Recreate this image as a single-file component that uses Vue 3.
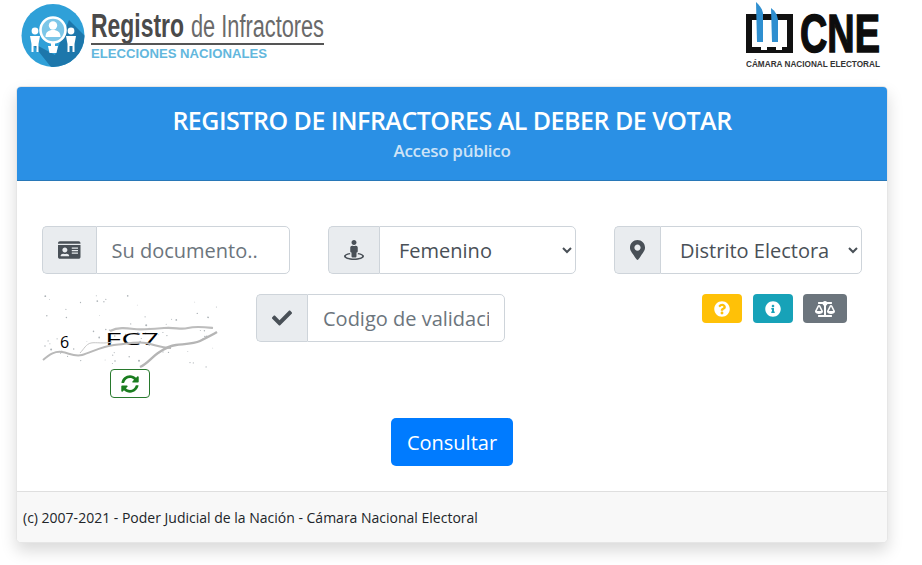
<script setup>
const paths = {
  id: 'M528 32H48C21.5 32 0 53.5 0 80v16h576V80c0-26.5-21.5-48-48-48zM0 432c0 26.5 21.5 48 48 48h480c26.5 0 48-21.5 48-48V128H0v304zm352-232c0-4.4 3.6-8 8-8h144c4.4 0 8 3.6 8 8v16c0 4.4-3.6 8-8 8H360c-4.4 0-8-3.6-8-8v-16zm0 64c0-4.4 3.6-8 8-8h144c4.4 0 8 3.6 8 8v16c0 4.4-3.6 8-8 8H360c-4.4 0-8-3.6-8-8v-16zm0 64c0-4.4 3.6-8 8-8h144c4.4 0 8 3.6 8 8v16c0 4.4-3.6 8-8 8H360c-4.4 0-8-3.6-8-8v-16zM176 192c35.3 0 64 28.7 64 64s-28.7 64-64 64-64-28.7-64-64 28.7-64 64-64zM67.1 396.2C75.5 370.5 99.6 352 128 352h8.2c12.3 5.1 25.7 8 39.8 8s27.6-2.9 39.8-8h8.2c28.4 0 52.5 18.5 60.9 44.2 3.2 9.9-5.2 19.8-15.6 19.8H82.7c-10.4 0-18.8-10-15.6-19.8z',
  street: 'M367.9 329.76c-4.62 5.3-9.78 10.1-15.9 13.65v22.94c66.52 9.34 112 28.05 112 49.65 0 30.93-93.12 56-208 56S48 446.93 48 416c0-21.6 45.48-40.3 112-49.65v-22.94c-6.12-3.55-11.28-8.35-15.9-13.65C58.87 345.34 0 378.05 0 416c0 53.02 114.62 96 256 96s256-42.98 256-96c0-37.95-58.87-70.66-144.1-86.24zM256 128c35.35 0 64-28.65 64-64S291.35 0 256 0s-64 28.65-64 64 28.65 64 64 64zm-64 192v96c0 17.67 14.33 32 32 32h64c17.67 0 32-14.33 32-32v-96c17.67 0 32-14.33 32-32v-96c0-26.51-21.49-48-48-48h-11.8c-11.07 5.03-23.26 8-36.2 8s-25.13-2.97-36.2-8H208c-26.51 0-48 21.49-48 48v96c0 17.67 14.33 32 32 32z',
  marker: 'M172.268 501.67C26.97 291.031 0 269.413 0 192 0 85.961 85.961 0 192 0s192 85.961 192 192c0 77.413-26.97 99.031-172.268 309.67-9.535 13.774-29.93 13.773-39.464 0zM192 272c44.183 0 80-35.817 80-80s-35.817-80-80-80-80 35.817-80 80 35.817 80 80 80z',
  check: 'M173.898 439.404l-166.4-166.4c-9.997-9.997-9.997-26.206 0-36.204l36.203-36.204c9.997-9.998 26.207-9.998 36.204 0L192 312.69 432.095 72.596c9.997-9.997 26.207-9.997 36.204 0l36.203 36.204c9.997 9.997 9.997 26.206 0 36.204l-294.4 294.401c-9.998 9.997-26.207 9.997-36.204-.001z',
  sync: 'M370.72 133.28C339.458 104.008 298.888 87.962 255.848 88c-77.458.068-144.328 53.178-162.791 126.85-1.344 5.363-6.122 9.15-11.651 9.15H24.103c-7.498 0-13.194-6.807-11.807-14.176C33.933 94.924 134.813 8 256 8c66.448 0 126.791 26.136 171.315 68.685L463.03 40.97C478.149 25.851 504 36.559 504 57.941V192c0 13.255-10.745 24-24 24H345.941c-21.382 0-32.09-25.851-16.971-40.971l41.75-41.749zM32 296h134.059c21.382 0 32.09 25.851 16.971 40.971l-41.75 41.75c31.262 29.273 71.835 45.319 114.876 45.28 77.418-.07 144.315-53.144 162.787-126.849 1.344-5.363 6.122-9.15 11.651-9.15h57.304c7.498 0 13.194 6.807 11.807 14.176C478.067 417.076 377.187 504 256 504c-66.448 0-126.791-26.136-171.315-68.685L48.97 471.03C33.851 486.149 8 475.441 8 454.059V320c0-13.255 10.745-24 24-24z',
  question: 'M504 256c0 136.997-111.043 248-248 248S8 392.997 8 256C8 119.083 119.043 8 256 8s248 111.083 248 248zM262.655 90c-54.497 0-89.255 22.957-116.549 63.758-3.536 5.286-2.353 12.415 2.715 16.258l34.699 26.31c5.205 3.947 12.621 3.008 16.665-2.122 17.864-22.658 30.113-35.797 57.303-35.797 20.429 0 45.698 13.148 45.698 32.958 0 14.976-12.363 22.667-32.534 33.976C247.128 238.528 216 254.941 216 296v4c0 6.627 5.373 12 12 12h56c6.627 0 12-5.373 12-12v-1.333c0-28.462 83.186-29.647 83.186-106.667 0-58.002-60.165-102-116.531-102zM256 338c-25.365 0-46 20.635-46 46 0 25.364 20.635 46 46 46s46-20.636 46-46c0-25.365-20.635-46-46-46z',
  info: 'M256 8C119.043 8 8 119.083 8 256c0 136.997 111.043 248 248 248s248-111.003 248-248C504 119.083 392.957 8 256 8zm0 110c23.196 0 42 18.804 42 42s-18.804 42-42 42-42-18.804-42-42 18.804-42 42-42zm56 254c0 6.627-5.373 12-12 12h-88c-6.627 0-12-5.373-12-12v-24c0-6.627 5.373-12 12-12h12v-64h-12c-6.627 0-12-5.373-12-12v-24c0-6.627 5.373-12 12-12h64c6.627 0 12 5.373 12 12v100h12c6.627 0 12 5.373 12 12v24z',
  scale: 'M256 336h-.02c0-16.18 1.34-8.73-85.05-181.51-17.65-35.29-68.19-35.36-85.87 0C-2.06 328.75.02 320.33.02 336H0c0 44.18 57.31 80 128 80s128-35.82 128-80zM128 176l72 144H56l72-144zm511.98 160c0-16.18 1.34-8.73-85.05-181.51-17.65-35.29-68.19-35.36-85.87 0-87.12 174.26-85.04 165.84-85.04 181.51H384c0 44.18 57.31 80 128 80s128-35.82 128-80h-.02zM440 320l72-144 72 144H440zm88 128H352V153.25c23.51-10.29 41.16-31.48 46.39-57.25H528c8.84 0 16-7.16 16-16V48c0-8.84-7.16-16-16-16H383.64C369.04 12.68 346.09 0 320 0s-49.04 12.68-63.64 32H112c-8.84 0-16 7.16-16 16v32c0 8.84 7.16 16 16 16h129.61c5.23 25.76 22.87 46.96 46.39 57.25V448H112c-8.84 0-16 7.16-16 16v32c0 8.84 7.16 16 16 16h416c8.84 0 16-7.16 16-16v-32c0-8.84-7.16-16-16-16z'
}

let seed = 17
const rnd = () => {
  seed = (seed * 1103 + 12345) % 65536
  return seed / 65536
}
const dots = Array.from({ length: 70 }, () => ({
  x: +(rnd() * 174 + 1).toFixed(1),
  y: +(rnd() * 72 + 1).toFixed(1),
  r: +(0.4 + rnd() * 0.6).toFixed(2)
}))
</script>

<template>
  <div class="page">
    <header class="top">
      <svg class="logo-left" viewBox="0 0 310 66" width="310" height="66" role="img" aria-label="Registro de Infractores">
        <defs>
          <clipPath id="disc"><circle cx="32" cy="33.500" r="31.500" /></clipPath>
        </defs>
        <circle cx="32" cy="33.500" r="31.500" fill="#2fa0d8" />
        <g clip-path="url(#disc)">
          <path d="M10 40 L34 53 L48 18 L70 40 L70 70 L34 70 Z" fill="#1d77ab" />
        </g>
        <circle cx="32" cy="28" r="12.500" fill="#7cc6e8" stroke="#fff" stroke-width="2.600" />
        <circle cx="32" cy="23.500" r="4.200" fill="#fff" />
        <path d="M24.500 35 c0-5 3-7 7.500-7 s7.500 2 7.500 7 Z" fill="#fff" />
        <rect x="30" y="41" width="4" height="3" fill="#fff" />
        <path d="M27 44 h10 l-1.500 7 h-7 Z" fill="#fff" />
        <circle cx="14" cy="29" r="3.400" fill="#fff" />
        <path d="M9 34 h10 l-1.500 8 v8 h-2 v-6 h-3 v6 h-2 v-8 Z" fill="#fff" />
        <circle cx="50" cy="29" r="3.400" fill="#fff" />
        <path d="M45 34 h10 l-1.500 8 v8 h-2 v-6 h-3 v6 h-2 v-8 Z" fill="#fff" />
        <text x="70" y="35" class="logo-strong" textLength="93" lengthAdjust="spacingAndGlyphs">Registro</text>
        <text x="170" y="35" class="logo-light" textLength="133" lengthAdjust="spacingAndGlyphs">de Infractores</text>
        <rect x="70" y="41" width="233" height="2" fill="#555" />
        <text x="70" y="56" class="logo-sub" textLength="176" lengthAdjust="spacingAndGlyphs">ELECCIONES NACIONALES</text>
      </svg>
      <svg class="logo-right" viewBox="0 0 136 70" width="136" height="70" role="img" aria-label="CNE">
        <path d="M0 14 H47 V53 H0 Z M6 20 V47 H41 V20 Z" fill="#111" fill-rule="evenodd" />
        <rect x="15" y="20" width="6" height="30" fill="#fff" />
        <rect x="30" y="20" width="6" height="30" fill="#fff" />
        <path d="M10 2 C13 5 16 8 17 13 V42 H11 Z" fill="#2f8fd0" />
        <path d="M25 8 C29 11 31 14 32 20 V42 H26 Z" fill="#2f8fd0" />
        <text x="54" y="52" class="cne-big" textLength="80" lengthAdjust="spacingAndGlyphs">CNE</text>
        <text x="0" y="67" class="cne-small" textLength="134" lengthAdjust="spacingAndGlyphs">CÁMARA NACIONAL ELECTORAL</text>
      </svg>
    </header>

    <section class="card">
      <div class="card-head">
        <h1>REGISTRO DE INFRACTORES AL DEBER DE VOTAR</h1>
        <p>Acceso público</p>
      </div>

      <div class="card-body">
        <div class="row-one">
          <div class="group">
            <span class="addon"><svg class="ico" viewBox="0 0 576 512" width="22.500" height="20"><path :d="paths.id" /></svg></span>
            <input class="field" type="text" placeholder="Su documento.." />
          </div>
          <div class="group">
            <span class="addon"><svg class="ico" viewBox="0 0 512 512" width="20" height="20"><path :d="paths.street" /></svg></span>
            <select class="field">
              <option>Femenino</option>
              <option>Masculino</option>
            </select>
          </div>
          <div class="group">
            <span class="addon"><svg class="ico" viewBox="0 0 384 512" width="15" height="20"><path :d="paths.marker" /></svg></span>
            <select class="field">
              <option>Distrito Electoral</option>
            </select>
          </div>
        </div>

        <div class="row-two">
          <div class="captcha">
            <svg viewBox="0 0 176 75" width="176" height="75" role="img" aria-label="captcha">
              <circle v-for="(d, i) in dots" :key="i" :cx="d.x" :cy="d.y" :r="d.r" fill="#aeb4b8" />
              <text x="18" y="54" class="cap-one">6</text>
              <text x="63" y="51" class="cap-two" textLength="54" lengthAdjust="spacingAndGlyphs">FC7</text>
              <path d="M1 66 C8 60 13 57 20 58 S32 63 40 61 S60 52 72 51 S95 47 104 49 S120 54 129 54" fill="none" stroke="#b9b9b9" stroke-width="2" />
              <path d="M68 37 C76 33 84 34 92 35 S110 35 122 34 S138 36 146 34 S162 33 171 34" fill="none" stroke="#bdbdbd" stroke-width="2.200" />
              <path d="M98 73 C105 70 110 63 116 59 S126 52 134 51 S152 50 158 47 S170 41 175 38" fill="none" stroke="#b5b5b5" stroke-width="2.400" />
              <path d="M38 59 C42 55 44 50 49 49 S62 50 70 48" fill="none" stroke="#c6c6c6" stroke-width="1" />
            </svg>
            <button class="refresh" type="button" aria-label="Actualizar"><svg viewBox="0 0 512 512" width="18" height="18"><path :d="paths.sync" fill="#1a7d1f" /></svg></button>
          </div>

          <div class="group code">
            <span class="addon"><svg class="ico" viewBox="0 0 512 512" width="20" height="20"><path :d="paths.check" /></svg></span>
            <input class="field" type="text" placeholder="Codigo de validación" />
          </div>

          <div class="actions">
            <button class="mini yellow" type="button" aria-label="Ayuda"><svg viewBox="0 0 512 512" width="16" height="16"><path :d="paths.question" fill="#fff" /></svg></button>
            <button class="mini teal" type="button" aria-label="Información"><svg viewBox="0 0 512 512" width="16" height="16"><path :d="paths.info" fill="#fff" /></svg></button>
            <button class="mini gray" type="button" aria-label="Legal"><svg viewBox="0 0 640 512" width="20" height="16"><path :d="paths.scale" fill="#fff" /></svg></button>
          </div>
        </div>

        <button class="submit" type="button">Consultar</button>
      </div>

      <footer class="card-foot">(c) 2007-2021 - Poder Judicial de la Nación - Cámara Nacional Electoral</footer>
    </section>
  </div>
</template>

<style>
html, body { margin: 0; background: #fff; }
</style>

<style scoped>
.page {
  box-sizing: border-box;
  width: 922px;
  height: 565px;
  overflow: hidden;
  padding: 0 34px 0 16px;
  font-family: "Open Sans", "Liberation Sans", sans-serif;
  color: #212529;
}
.top {
  height: 86px;
  display: flex;
  justify-content: space-between;
  align-items: flex-start;
}
.logo-left { margin: 2px 0 0 5px; }
.logo-right { margin: 0 6px 0 0; }
.logo-strong { font: 700 33px "Liberation Sans", sans-serif; fill: #4a4a4a; }
.logo-light { font: 400 31px "Liberation Sans", sans-serif; fill: #6a6a6a; }
.logo-sub { font: 700 12px "Liberation Sans", sans-serif; fill: #62b7dd; }
.cne-big { font: 700 54px "Liberation Sans", sans-serif; fill: #0d0d0d; stroke: #0d0d0d; stroke-width: 1.500px; }
.cne-small { font: 700 9px "Liberation Sans", sans-serif; fill: #333; }
.card {
  height: 457px;
  box-sizing: border-box;
  display: flex;
  flex-direction: column;
  background: #fff;
  border: 1px solid #e6e6e6;
  border-radius: 5px;
  box-shadow: 0 8px 16px rgba(0, 0, 0, 0.15);
  overflow: hidden;
}
.card-head {
  height: 95px;
  box-sizing: border-box;
  margin: -1px -1px 0;
  padding-top: 17px;
  background: #2a90e5;
  border-bottom: 1px solid #2878b8;
  text-align: center;
  color: #fff;
}
.card-head h1 {
  margin: 0;
  font-size: 25px;
  line-height: 34px;
  font-weight: 600;
  letter-spacing: -0.5px;
}
.card-head p {
  margin: 2px 0 0;
  font-size: 17px;
  line-height: 23px;
  font-weight: 600;
  letter-spacing: -0.3px;
  color: #cde3f7;
}
.card-body {
  flex: 1;
  display: flex;
  flex-direction: column;
  padding: 45px 25px 0;
}
.row-one {
  display: grid;
  grid-template-columns: repeat(3, 248px);
  column-gap: 38px;
}
.group {
  display: flex;
  height: 48px;
  min-width: 0;
}
.addon {
  display: flex;
  align-items: center;
  padding: 0 15px;
  flex: none;
  background: #e9ecef;
  border: 1px solid #ced4da;
  border-right: 0;
  border-radius: 5px 0 0 5px;
}
.ico { fill: #495057; display: block; }
.field {
  flex: 1;
  min-width: 0;
  box-sizing: border-box;
  height: 100%;
  margin: 0;
  padding: 0 15px;
  font: 400 20px "Open Sans", sans-serif;
  color: #495057;
  background: #fff;
  border: 1px solid #ced4da;
  border-radius: 0 5px 5px 0;
  outline: none;
}
.field::placeholder { color: #6c757d; opacity: 1; }
.row-two {
  display: flex;
  align-items: flex-start;
  margin-top: 20px;
}
.captcha {
  width: 176px;
  display: flex;
  flex-direction: column;
  align-items: center;
  flex: none;
  margin-right: 38px;
}
.captcha svg { display: block; }
.refresh {
  width: 40px;
  height: 29px;
  padding: 0;
  display: flex;
  align-items: center;
  justify-content: center;
  background: #fff;
  border: 1px solid #28792d;
  border-radius: 4px;
}
.code { width: 249px; flex: none; }
.actions {
  display: flex;
  gap: 10.500px;
  margin: 0 15px 0 auto;
}
.mini {
  height: 29px;
  padding: 0 12px;
  display: flex;
  align-items: center;
  border: 0;
  border-radius: 4px;
}
.yellow { background: #ffc107; }
.teal { background: #17a2b8; }
.gray { background: #6c757d; }
.submit {
  align-self: center;
  width: 122px;
  height: 48px;
  margin-top: 20px;
  padding: 0;
  font: 400 20px "Open Sans", sans-serif;
  color: #fff;
  background: #007bff;
  border: 0;
  border-radius: 5px;
}
.card-foot {
  height: 51px;
  box-sizing: border-box;
  display: flex;
  align-items: center;
  padding: 0 6px;
  font-size: 14px;
  background: #f8f8f8;
  border-top: 1px solid #dfdfdf;
}
</style>
